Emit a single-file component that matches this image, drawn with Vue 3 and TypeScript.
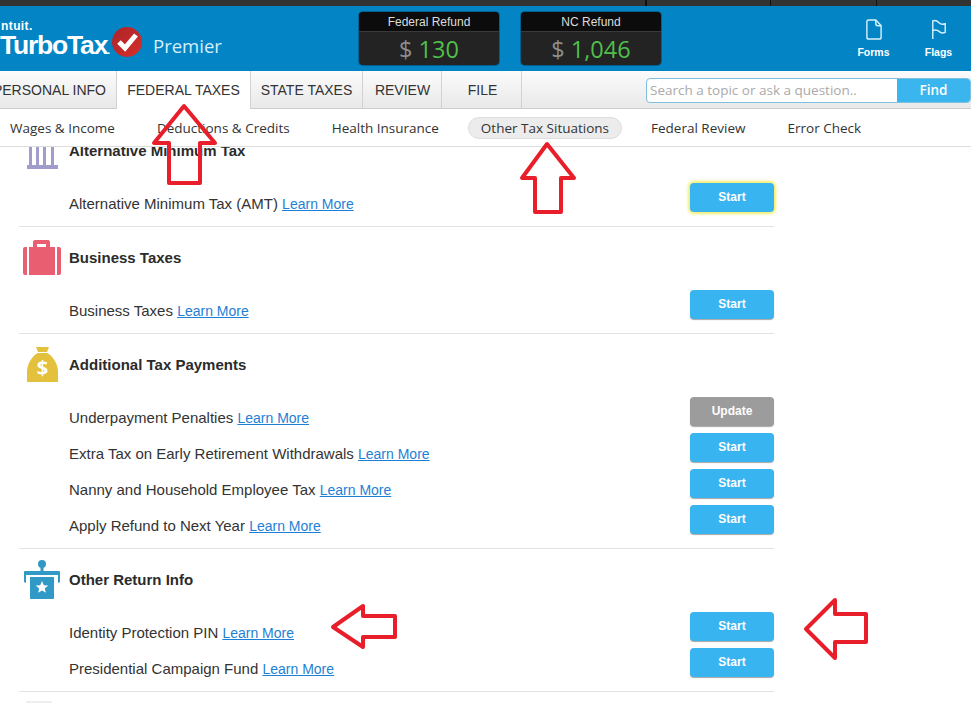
<template>
  <div class="page">
    <div class="top-strip"><i v-for="n in 4" :key="n"></i></div>

    <header class="brand-bar">
      <div class="logo">
        <div class="logo-mark">
          <span class="intuit">ntuit.</span>
          <span class="turbotax">TurboTax<small>.</small></span>
        </div>
        <svg class="logo-check" width="32" height="32" viewBox="0 0 32 32">
          <defs>
            <linearGradient id="chk" x1="0" y1="0" x2="1" y2="1">
              <stop offset="0" stop-color="#a92429" />
              <stop offset="1" stop-color="#d92f2a" />
            </linearGradient>
          </defs>
          <circle cx="16" cy="16" r="15" fill="url(#chk)" />
          <path d="M8 16l6 6L25 9" fill="none" stroke="#fff" stroke-width="5" />
        </svg>
        <span class="edition">Premier</span>
      </div>

      <div class="refunds">
        <div v-for="r in refunds" :key="r.label" class="refund">
          <div class="refund-label">{{ r.label }}</div>
          <div class="refund-value"><span>$</span> <b>{{ r.value }}</b></div>
        </div>
      </div>

      <div class="tools">
        <div class="tool">
          <svg width="16" height="21" viewBox="0 0 18 22" preserveAspectRatio="none" fill="none" stroke="#d8f0fb" stroke-width="1.6">
            <path d="M3 1h8l6 6v12a2 2 0 0 1-2 2H3a2 2 0 0 1-2-2V3a2 2 0 0 1 2-2z" />
            <path d="M11 1v4a2 2 0 0 0 2 2h4" />
          </svg>
          <span>Forms</span>
        </div>
        <div class="tool">
          <svg width="16" height="21" viewBox="0 0 18 22" preserveAspectRatio="none" fill="none" stroke="#d8f0fb" stroke-width="1.6">
            <path d="M2 21V2c3-1 5 0 7 2s4 2 7 1v9c-3 1-5 1-7-1s-4-2-7-1" />
          </svg>
          <span>Flags</span>
        </div>
      </div>
    </header>

    <nav class="tabs">
      <a v-for="t in tabs" :key="t.label" class="tab" :class="[t.cls, { active: t.active }]">{{ t.label }}</a>
      <div class="search">
        <span class="search-input">Search a topic or ask a question..</span>
        <span class="search-btn">Find</span>
      </div>
    </nav>

    <nav class="subnav">
      <a v-for="s in subnav" :key="s" class="subnav-item" :class="{ current: s === 'Other Tax Situations' }">{{ s }}</a>
    </nav>

    <main class="sections">
      <section v-for="sec in sections" :key="sec.title" class="section">
        <div class="section-head">
          <svg class="section-icon" width="40" height="40" viewBox="0 0 40 40">
            <g v-if="sec.icon === 'pillars'" fill="#a09ccb">
              <rect x="5" y="2" width="31" height="4" />
              <rect x="7" y="6" width="3" height="28" />
              <rect x="14" y="6" width="3" height="28" />
              <rect x="21" y="6" width="3" height="28" />
              <rect x="29" y="6" width="3" height="28" />
              <rect x="5" y="34" width="31" height="4" />
            </g>
            <g v-else-if="sec.icon === 'case'" fill="#e95f71">
              <path fill-rule="evenodd" d="M13 2h13a2 2 0 0 1 2 2v5h-4V6h-9v3h-4V4a2 2 0 0 1 2-2z" />
              <path d="M1 11a2 2 0 0 1 2-2h2v28H3a2 2 0 0 1-2-2z" />
              <rect x="7" y="9" width="26" height="28" />
              <path d="M35 9h2a2 2 0 0 1 2 2v24a2 2 0 0 1-2 2h-2z" />
            </g>
            <g v-else-if="sec.icon === 'bag'">
              <path d="M14 2h13l-2 5H16z" fill="#e3c13c" />
              <path d="M16 8h9c6 3 11 11 11 19v10H5V27C5 19 10 11 16 8z" fill="#e3c13c" />
              <text x="20.500" y="30" class="bag-sign">$</text>
            </g>
            <g v-else-if="sec.icon === 'box'" fill="#3199c6">
              <circle cx="20" cy="4" r="4" />
              <rect x="18.500" y="6" width="3" height="6" />
              <path d="M3 11h34a1 1 0 0 1 1 1v10l-2 1v-8H4v8l-2-1V12a1 1 0 0 1 1-1z" />
              <path d="M8 17h24v21a1 1 0 0 1-1 1H9a1 1 0 0 1-1-1z" />
              <path d="M20 21l1.800 4.200 4.500.3-3.500 2.900 1.100 4.400-3.900-2.400-3.900 2.400 1.100-4.400-3.500-2.900 4.500-.3z" fill="#fff" />
            </g>
            <rect v-else x="5" y="-1" width="24" height="40" fill="none" stroke="#ddd" />
          </svg>
          <h3>{{ sec.title }}</h3>
        </div>
        <div v-for="row in sec.rows" :key="row.label" class="row">
          <span class="row-text">{{ row.label }} <a class="learn">Learn More</a></span>
          <button class="action" :class="{ update: row.action === 'Update', glow: row.glow }" type="button">{{ row.action }}</button>
        </div>
      </section>
    </main>

    <!-- red annotation arrows drawn on top of the screenshot -->
    <svg class="annotations" width="971" height="703" viewBox="0 0 971 703">
      <g fill="none" stroke="#e81f2b" stroke-width="4" stroke-linejoin="round">
        <path d="M184 106 L154 143 H169 V183 H200 V143 H215 Z" />
        <path d="M547 144 L522 178 H535 V212 H561 V178 H574 Z" />
        <path d="M333 627 L363 606 V616 H395 V637 H363 V647 Z" />
        <path d="M806 629 L835 600 V614 H866 V642 H835 V658 Z" />
      </g>
    </svg>
  </div>
</template>

<script setup lang="ts">
interface Row {
  label: string
  action: string
  glow?: boolean
}

interface Section {
  title: string
  icon: string
  rows: Row[]
}

const refunds = [
  { label: 'Federal Refund', value: '130' },
  { label: 'NC Refund', value: '1,046' },
]

const tabs = [
  { label: 'PERSONAL INFO', cls: 'tab-personal' },
  { label: 'FEDERAL TAXES', cls: 'tab-federal', active: true },
  { label: 'STATE TAXES', cls: 'tab-state' },
  { label: 'REVIEW', cls: 'tab-review' },
  { label: 'FILE', cls: 'tab-file' },
]

const subnav = [
  'Wages & Income',
  'Deductions & Credits',
  'Health Insurance',
  'Other Tax Situations',
  'Federal Review',
  'Error Check',
]

const sections: Section[] = [
  {
    title: 'Alternative Minimum Tax',
    icon: 'pillars',
    rows: [{ label: 'Alternative Minimum Tax (AMT)', action: 'Start', glow: true }],
  },
  {
    title: 'Business Taxes',
    icon: 'case',
    rows: [{ label: 'Business Taxes', action: 'Start' }],
  },
  {
    title: 'Additional Tax Payments',
    icon: 'bag',
    rows: [
      { label: 'Underpayment Penalties', action: 'Update' },
      { label: 'Extra Tax on Early Retirement Withdrawals', action: 'Start' },
      { label: 'Nanny and Household Employee Tax', action: 'Start' },
      { label: 'Apply Refund to Next Year', action: 'Start' },
    ],
  },
  {
    title: 'Other Return Info',
    icon: 'box',
    rows: [
      { label: 'Identity Protection PIN', action: 'Start' },
      { label: 'Presidential Campaign Fund', action: 'Start' },
    ],
  },
  { title: '', icon: 'next', rows: [] },
]
</script>

<style>
html,
body {
  margin: 0;
  overflow: hidden;
  background: #fff;
}
</style>

<style scoped>
.page {
  position: relative;
  width: 971px;
  height: 703px;
  overflow: hidden;
  font-family: "Liberation Sans", Arial, sans-serif;
  color: #333;
}

.top-strip {
  position: relative;
  height: 6px;
  background: #333;
}

.top-strip i {
  position: absolute;
  top: 0;
  width: 1px;
  height: 6px;
  background: #111;
}

.top-strip i:nth-child(1) { left: 645px; }
.top-strip i:nth-child(2) { left: 770px; }
.top-strip i:nth-child(3) { left: 876px; }
.top-strip i:nth-child(4) { left: 646px; }

.brand-bar {
  display: flex;
  height: 65px;
  background: #0284c5;
  color: #fff;
}

.logo {
  display: flex;
  width: 359px;
  flex: none;
  align-items: flex-start;
}

.logo-mark {
  display: flex;
  flex-direction: column;
  width: 111px;
}

.intuit {
  margin: 14px 0 0 1px;
  font-size: 12px;
  font-weight: 700;
  line-height: 12px;
  letter-spacing: 0.4px;
}

.turbotax {
  font-size: 26.500px;
  font-weight: 700;
  line-height: 26px;
  letter-spacing: -1.200px;
  white-space: nowrap;
}

.turbotax small {
  font-size: 10px;
}

.logo-check {
  margin: 20px 0 0 0;
}

.edition {
  margin: 29px 0 0 10px;
  font-family: "Open Sans", sans-serif;
  font-size: 18.500px;
  line-height: 22px;
  color: #d5eefa;
}

.refunds {
  display: flex;
  gap: 22px;
  margin-top: 6px;
}

.refund {
  width: 140px;
  height: 53px;
  overflow: hidden;
  border-radius: 4px;
  background: #232323;
  box-shadow: 0 0 0 1px rgba(0, 60, 90, 0.5);
}

.refund-label {
  height: 19px;
  border-bottom: 1px solid #3a3a3a;
  background: #0c0c0c;
  color: #ddd;
  font-size: 12px;
  line-height: 20px;
  text-align: center;
}

.refund-value {
  font-family: "Open Sans", sans-serif;
  font-size: 23.500px;
  line-height: 35px;
  text-align: center;
  color: #8c8c8c;
}

.refund-value b {
  font-weight: 400;
  color: #4fbf4a;
}

.tools {
  display: flex;
  gap: 34px;
  margin: 13px 0 0 197px;
}

.tool {
  display: flex;
  width: 31px;
  flex-direction: column;
  align-items: center;
  gap: 6px;
  font-size: 10.500px;
  font-weight: 700;
  line-height: 12px;
}

.tabs {
  display: flex;
  height: 37px;
  border-bottom: 1px solid #ccc;
  background: linear-gradient(#fbfbfb, #e9e9e9);
  font-size: 14px;
}

.tab {
  display: flex;
  align-items: center;
  justify-content: center;
  box-sizing: border-box;
  flex: none;
  height: 37px;
  border-right: 1px solid #d2d2d2;
  white-space: nowrap;
}

.tab-personal { width: 116px; justify-content: flex-end; padding-right: 10px; border-right: 0; }
.tab-federal { width: 135px; }
.tab-state { width: 112px; }
.tab-review { width: 79px; padding-left: 1px; }
.tab-file { width: 80px; padding-left: 2px; }

.tab.active {
  position: relative;
  height: 38px;
  border-left: 1px solid #d2d2d2;
  background: #fff;
}

.search {
  display: flex;
  box-sizing: border-box;
  width: 325px;
  height: 25px;
  margin: 7px 0 0 124px;
  overflow: hidden;
  border: 1px solid #7fbfe0;
  border-radius: 4px;
  background: #fff;
  font-family: "Open Sans", sans-serif;
  font-size: 13.500px;
  line-height: 23px;
}

.search-input {
  flex: 1;
  padding-left: 3px;
  color: #aaa;
  white-space: nowrap;
}

.search-btn {
  width: 73px;
  background: #3bb5ee;
  color: #fff;
  font-weight: 600;
  text-align: center;
}

.subnav {
  position: relative;
  z-index: 1;
  display: flex;
  align-items: center;
  gap: 42px;
  box-sizing: border-box;
  height: 38px;
  padding-left: 10px;
  border-bottom: 1px solid #ddd;
  background: #fff;
  font-family: "Open Sans", sans-serif;
  font-size: 13.500px;
  white-space: nowrap;
}

.subnav-item.current {
  margin: 0 -13px;
  padding: 0 12px;
  border: 1px solid #ddd;
  border-radius: 12px;
  background: #ececec;
  line-height: 20px;
}

.sections {
  width: 755px;
  margin: -27px 0 0 19px;
}

.section {
  padding-bottom: 7px;
  border-bottom: 1px solid #e3e3e3;
}

.section-head {
  display: flex;
  align-items: center;
  box-sizing: border-box;
  height: 63px;
  padding-bottom: 1px;
}

.section-icon {
  flex: none;
  margin: 0 7px 0 3px;
  overflow: visible;
}

.bag-sign {
  fill: #fff;
  font-family: "Open Sans", sans-serif;
  font-size: 20px;
  font-weight: 700;
  text-anchor: middle;
}

h3 {
  margin: -2px 0 0;
  color: #2b2b2b;
  font-size: 15px;
  font-weight: 700;
}

.row {
  display: flex;
  justify-content: space-between;
  height: 36px;
  padding-left: 50px;
}

.row-text {
  margin-top: 12px;
  font-size: 15px;
  line-height: 17px;
}

.learn {
  color: #1e7fd6;
  font-size: 14px;
  text-decoration: underline;
}

.action {
  width: 84px;
  height: 29px;
  padding: 0 0 2px;
  border: 0;
  border-radius: 4px;
  background: #38b4f1;
  box-shadow: 0 1px 1px rgba(0, 0, 0, 0.35);
  color: #fff;
  font-family: "Liberation Sans", sans-serif;
  font-size: 12px;
  font-weight: 700;
}

.action.update {
  background: #9c9c9c;
}

.action.glow {
  box-shadow: 0 0 3px 2px #f2ee6b;
}

.annotations {
  position: absolute;
  top: 0;
  left: 0;
  z-index: 2;
  pointer-events: none;
}
</style>
